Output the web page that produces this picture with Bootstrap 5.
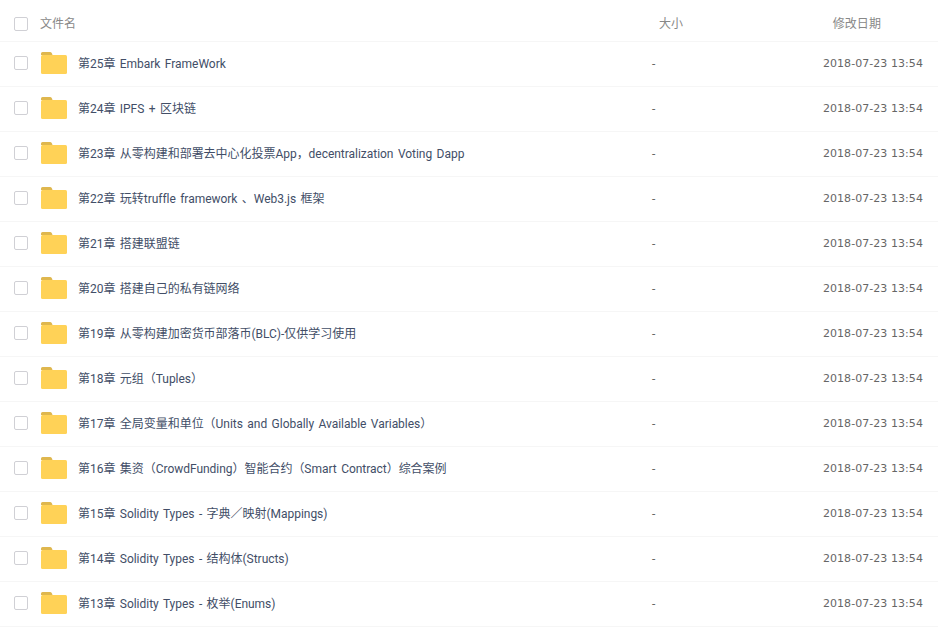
<!DOCTYPE html>
<html lang="zh"><head><meta charset="utf-8"><title>文件列表</title>
<link rel="stylesheet" href="https://cdn.jsdelivr.net/npm/bootstrap@5.3.0/dist/css/bootstrap.min.css">
<style>
html,body{height:636px;overflow:hidden;background:#fff}
body{font-family:Roboto,"Noto Sans CJK SC",sans-serif;font-size:12px;color:#424e67;letter-spacing:-.03px;word-spacing:1.5px}
.flist{list-style:none;margin:0;padding:0}
.frow{height:45px;border-bottom:1px solid #f6f6f6;padding-left:14px}
.fhead{height:42px;color:#888;padding-top:6px}
.fbox{width:14px;height:14px;border:1px solid #d0d0d5;border-radius:2px;margin:0 13px 2px 0;flex:none}
.fhead .fbox{margin:0 12px 0 0}
.ficon{width:26px;height:22px;margin:0 11px 2px 0;flex:none}
.fname{width:574px;flex:none;white-space:nowrap;margin-bottom:1px}
.fhead .fname{width:612px;margin-bottom:0}
.fsize{width:120px;flex:none;color:#666}
.fdate{width:151px;flex:none;color:#666;text-align:right;font-family:"DejaVu Sans",sans-serif;font-size:11px;letter-spacing:.06px;word-spacing:0}
.fhead .fsize{color:#888;padding-left:7px}
.fhead .fdate{color:#888;padding-right:42px;font-family:Roboto,"Noto Sans CJK SC",sans-serif;font-size:12px}
</style></head><body>
<ul class="flist">
<li class="frow fhead d-flex align-items-center"><span class="fbox"></span><span class="fname">文件名</span><span class="fsize">大小</span><span class="fdate">修改日期</span></li>
<script>
const names=["第25章 Embark FrameWork","第24章 IPFS + 区块链","第23章 从零构建和部署去中心化投票App，decentralization Voting Dapp","第22章 玩转truffle framework 、Web3.js 框架","第21章 搭建联盟链","第20章 搭建自己的私有链网络","第19章 从零构建加密货币部落币(BLC)-仅供学习使用","第18章 元组（Tuples）","第17章 全局变量和单位（Units and Globally Available Variables）","第16章 集资（CrowdFunding）智能合约（Smart Contract）综合案例","第15章 Solidity Types - 字典／映射(Mappings)","第14章 Solidity Types - 结构体(Structs)","第13章 Solidity Types - 枚举(Enums)"];
document.write(names.map(n=>`<li class="frow d-flex align-items-center"><span class="fbox"></span><svg class="ficon" viewBox="0 0 26 22"><path d="M0 1.500A1.500 1.500 0 0 1 1.500 0H9a2 2 0 0 1 2 1.500L11.500 3H0z" fill="#dfb74e"/><rect x="0" y="3" width="26" height="19" rx="1.500" fill="#ffd257"/></svg><span class="fname">${n}</span><span class="fsize">-</span><span class="fdate">2018-07-23 13:54</span></li>`).join(""));
</script>
</ul>
<script src="https://cdn.jsdelivr.net/npm/bootstrap@5.3.0/dist/js/bootstrap.bundle.min.js"></script>
</body></html>
